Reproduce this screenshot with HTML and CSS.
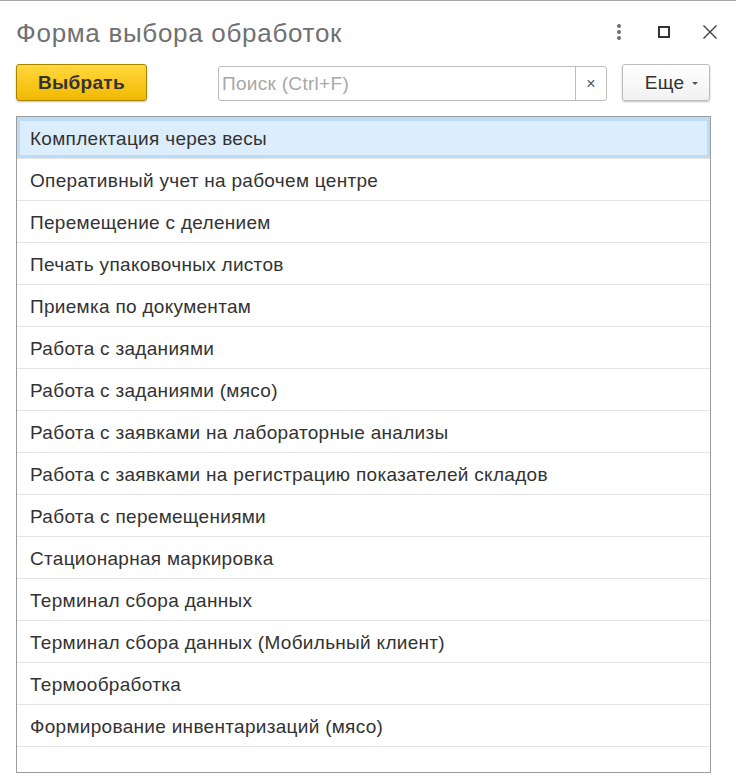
FILE: index.html
```html
<!DOCTYPE html>
<html lang="ru">
<head>
<meta charset="utf-8">
<title>Форма выбора обработок</title>
<link rel="stylesheet" href="styles.css">
</head>
<body>
<div class="window">
  <header class="titlebar">
    <h1 class="title">Форма выбора обработок</h1>
    <div class="win-actions">
      <span class="icon-more"><i></i><i></i><i></i></span>
      <span class="icon-max"></span>
      <svg class="icon-close" width="14" height="14" viewBox="0 0 14 14"><path d="M0.5 0.5 L13.5 13.5 M13.5 0.5 L0.5 13.5" stroke="#404040" stroke-width="1.4" fill="none"/></svg>
    </div>
  </header>
  <div class="toolbar">
    <button class="btn-primary">Выбрать</button>
    <div class="search">
      <input class="search-input" type="text" placeholder="Поиск (Ctrl+F)">
      <span class="search-clear">×</span>
    </div>
    <button class="btn-more">Еще <span class="caret"></span></button>
  </div>
  <div class="list">
    <div class="row selected">Комплектация через весы</div>
    <div class="row">Оперативный учет на рабочем центре</div>
    <div class="row">Перемещение с делением</div>
    <div class="row">Печать упаковочных листов</div>
    <div class="row">Приемка по документам</div>
    <div class="row">Работа с заданиями</div>
    <div class="row">Работа с заданиями (мясо)</div>
    <div class="row">Работа с заявками на лабораторные анализы</div>
    <div class="row">Работа с заявками на регистрацию показателей складов</div>
    <div class="row">Работа с перемещениями</div>
    <div class="row">Стационарная маркировка</div>
    <div class="row">Терминал сбора данных</div>
    <div class="row">Терминал сбора данных (Мобильный клиент)</div>
    <div class="row">Термообработка</div>
    <div class="row">Формирование инвентаризаций (мясо)</div>
  </div>
</div>
</body>
</html>
```
FILE: styles.css
```css
* { box-sizing: border-box; }
html, body { margin: 0; padding: 0; background: #fff; }
body {
  font-family: "Liberation Sans", Arial, sans-serif;
  color: #333;
  width: 736px;
  height: 784px;
  overflow: hidden;
}
.window {
  border-top: 1px solid #a6a6a6;
  height: 784px;
}
.titlebar {
  display: flex;
  align-items: center;
  justify-content: space-between;
  height: 62px;
  padding: 0 19px 0 16px;
}
.title {
  margin: 0;
  font-size: 26px;
  letter-spacing: 0.7px;
  font-weight: normal;
  color: #717171;
  padding-top: 2px;
}
.win-actions {
  display: flex;
  align-items: center;
  padding-bottom: 1px;
}
.icon-more {
  display: flex;
  flex-direction: column;
  gap: 2px;
  width: 4px;
  margin-right: 37px;
}
.icon-more i {
  display: block;
  width: 4px;
  height: 4px;
  border-radius: 50%;
  background: #6e6e6e;
}
.icon-max {
  display: block;
  width: 12px;
  height: 12px;
  border: 2px solid #333;
  margin-right: 33px;
}
.icon-close { display: block; }

.toolbar {
  display: flex;
  align-items: center;
  height: 39px;
  padding: 0 25px 0 16px;
}
.btn-primary {
  width: 131px;
  height: 37px;
  border: 1px solid #a88500;
  border-radius: 3px;
  background: linear-gradient(#ffd83e, #f2b800);
  box-shadow: 0 1px 2px rgba(0,0,0,0.25);
  font-family: inherit;
  font-size: 19px;
  letter-spacing: 0.3px;
  font-weight: bold;
  color: #333;
  padding: 0;
  margin-right: 71px;
}
.search {
  display: flex;
  width: 389px;
  height: 35px;
  border: 1px solid #bdbdbd;
  border-radius: 3px;
  margin-top: 2px;
  margin-right: 15px;
}
.search-input {
  flex: 1;
  min-width: 0;
  border: none;
  outline: none;
  padding: 0 0 0 3px;
  font-family: inherit;
  font-size: 19px;
  letter-spacing: 0.3px;
  color: #333;
  background: transparent;
}
.search-input::placeholder { color: #a8a8a8; }
.search-clear {
  width: 31px;
  border-left: 1px solid #bdbdbd;
  display: flex;
  align-items: center;
  justify-content: center;
  color: #555;
  font-size: 16px;
}
.btn-more {
  width: 88px;
  height: 37px;
  border: 1px solid #bcbcbc;
  border-radius: 3px;
  background: linear-gradient(#ffffff, #f1f1f1);
  box-shadow: 0 1px 2px rgba(0,0,0,0.25);
  font-family: inherit;
  font-size: 19px;
  letter-spacing: 0.3px;
  color: #333;
  padding: 0 0 0 11px;
  display: flex;
  align-items: center;
  justify-content: center;
  gap: 8px;
}
.caret {
  width: 0;
  height: 0;
  border-left: 3px solid transparent;
  border-right: 3px solid transparent;
  border-top: 3px solid #555;
  margin-top: 2px;
}

.list {
  margin: 14px 25px 0 16px;
  height: 657px;
  border: 1px solid #9c9c9c;
}
.row {
  height: 42px;
  border-bottom: 1px solid #e4e4e4;
  display: flex;
  align-items: center;
  padding: 2px 0 0 13px;
  font-size: 19px;
  letter-spacing: 0.3px;
  color: #333;
  white-space: nowrap;
}
.row.selected {
  background: #dcedfc;
  border: 3px solid #bcdcf5;
  border-top-width: 4px;
  padding-left: 10px;
  padding-top: 1px;
  box-shadow: 0 1px 0 #e4e4e4;
  height: 41px;
  margin-bottom: 1px;
}
```
